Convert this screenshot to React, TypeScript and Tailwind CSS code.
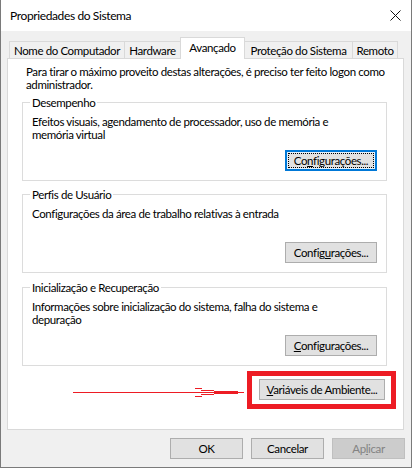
import React from "react";

interface WinButtonProps {
  label: React.ReactNode;
  width: string;
  focused?: boolean;
  disabled?: boolean;
}

function WinButton({ label, width, focused, disabled }: WinButtonProps): React.ReactElement {
  if (focused) {
    return (
      <div className={`${width} flex h-[21px] border-2 border-[#0078d7] bg-[#e5f1fb] p-[1px]`}>
        <div className="flex flex-1 items-center justify-center border border-dotted border-black bg-[#e1e1e1] text-black">
          {label}
        </div>
      </div>
    );
  }
  return (
    <div
      className={`${width} flex h-[21px] items-center justify-center border ${
        disabled ? "border-[#bfbfbf] bg-[#cccccc] text-[#838383]" : "border-[#adadad] bg-[#e1e1e1] text-black"
      }`}
    >
      {label}
    </div>
  );
}

interface GroupProps {
  title: string;
  lines: string[];
  button: React.ReactNode;
  focused?: boolean;
  className?: string;
}

function Group({ title, lines, button, focused, className }: GroupProps): React.ReactElement {
  return (
    <fieldset className={`ml-[14px] mr-[16px] border border-[#dcdcdc] px-[9px] pb-[9px] ${className ?? ""}`}>
      <legend className="-ml-[2px] bg-white px-[2px] leading-[13px]">{title}</legend>
      <div className="mt-[6px] h-[26px] leading-[13px]">
        {lines.map((line) => (
          <div key={line}>{line}</div>
        ))}
      </div>
      <div className="mt-[9px] flex justify-end">
        <WinButton width="w-[92px]" label={button} focused={focused} />
      </div>
    </fieldset>
  );
}

export default function App(): React.ReactElement {
  return (
    <div className="flex h-[468px] w-[412px] flex-col whitespace-nowrap border-x border-b border-[#7a7a7a] bg-[#f0f0f0] text-[11.5px] tracking-[-0.38px] text-black [font-family:Lato,sans-serif]">
      {/* Title bar */}
      <div className="flex h-[31px] items-center justify-between bg-white pl-[9px] pr-[9px]">
        <span className="text-[12px] leading-[13px]">Propriedades do Sistema</span>
        <svg width="11" height="11" viewBox="0 0 11 11" className="mr-[1px]">
          <path d="M0.5 0.5 L10.5 10.5 M10.5 0.5 L0.5 10.5" stroke="#111" strokeWidth="1" />
        </svg>
      </div>

      {/* Tabs */}
      <div className="mt-[6px] flex h-[21px] items-end pl-[8px]">
        <div className="flex h-[17px] w-[115px] items-center justify-center border-l border-t border-[#d9d9d9] leading-[13px]">
          Nome do Computador
        </div>
        <div className="flex h-[17px] w-[56px] items-center justify-center border-l border-t border-[#d9d9d9] leading-[13px]">
          Hardware
        </div>
        <div className="relative z-10 -mb-[1px] flex h-[22px] w-[65px] justify-center border-x border-t border-[#d9d9d9] bg-white pt-[3px] leading-[13px]">
          Avançado
        </div>
        <div className="flex h-[17px] w-[108px] items-center justify-center border-r border-t border-[#d9d9d9] leading-[13px]">
          Proteção do Sistema
        </div>
        <div className="flex h-[17px] w-[45px] items-center justify-center border-r border-t border-[#d9d9d9] leading-[13px]">
          Remoto
        </div>
      </div>

      {/* Tab panel */}
      <div className="ml-[6px] mr-[7px] flex h-[372px] flex-col border border-[#d9d9d9] bg-white pt-[6px]">
        <div className="pl-[18px] leading-[13px]">
          Para tirar o máximo proveito destas alterações, é preciso ter feito logon como
          <br />
          administrador.
        </div>

        <Group
          className="mt-[5px]"
          title="Desempenho"
          lines={["Efeitos visuais, agendamento de processador, uso de memória e", "memória virtual"]}
          focused
          button={
            <span>
              Co<u>n</u>figurações...
            </span>
          }
        />
        <Group
          className="mt-[7px]"
          title="Perfis de Usuário"
          lines={["Configurações da área de trabalho relativas à entrada"]}
          button={
            <span>
              Config<u>u</u>rações...
            </span>
          }
        />
        <Group
          className="mt-[8px]"
          title="Inicialização e Recuperação"
          lines={["Informações sobre inicialização do sistema, falha do sistema e", "depuração"]}
          button={
            <span>
              <u>C</u>onfigurações...
            </span>
          }
        />

        {/* Highlighted environment variables button */}
        <div className="mt-[5px] mr-[7px] flex items-center justify-end">
          <svg width="172" height="14" viewBox="0 0 172 14" className="mr-[2px]">
            <g stroke="#ed1c24" strokeWidth="1" fill="none">
              <path d="M0 9.5 H171" />
              <path d="M122 5.5 H129 M128 7.5 H141 M141 8.5 H153" />
              <path d="M122 13.5 H129 M128 11.5 H141 M141 10.5 H153" />
            </g>
            <rect x="153" y="8" width="12" height="3" fill="#ed1c24" />
          </svg>
          <div className="w-[149px] border-[5px] border-[#ed1c24] pb-[4px] pl-[7px] pt-[3px]">
            <WinButton
              width="w-[126px]"
              label={
                <span>
                  <u>V</u>ariáveis de Ambiente...
                </span>
              }
            />
          </div>
        </div>
      </div>

      {/* Dialog buttons */}
      <div className="mt-[8px] flex justify-end gap-[8px] pr-[6px]">
        <WinButton width="w-[73px]" label="OK" />
        <WinButton width="w-[73px]" label="Cancelar" />
        <WinButton
          width="w-[73px]"
          disabled
          label={
            <span>
              Ap<u>l</u>icar
            </span>
          }
        />
      </div>
    </div>
  );
}
